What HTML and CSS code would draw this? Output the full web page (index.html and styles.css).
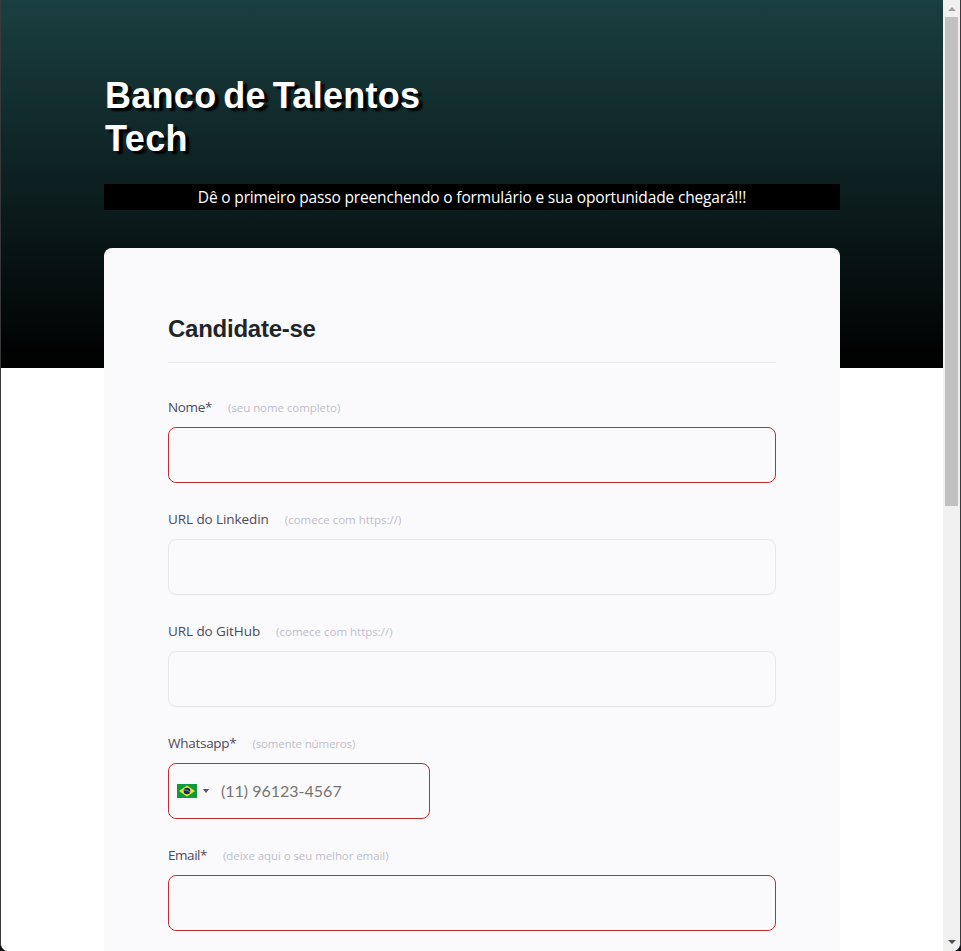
FILE: index.html
```html
<!DOCTYPE html>
<html lang="pt-BR">
<head>
<meta charset="utf-8">
<title>Banco de Talentos Tech</title>
<link rel="stylesheet" href="styles.css">
</head>
<body>
<div class="window">
  <div class="page">
    <header class="hero">
      <h1 class="hero-title"><span class="line-one">Banco de Talentos</span><br><span class="line-two">Tech</span></h1>
      <p class="hero-text"><span>Dê o primeiro passo preenchendo o formulário e sua oportunidade chegará!!!</span></p>
    </header>
    <main class="card">
      <h2 class="card-title"><span>Candidate-se</span></h2>
      <form class="form">
        <div class="field">
          <label class="label" for="nome"><span class="name n1">Nome*</span><small class="hint h1">(seu nome completo)</small></label>
          <input class="input required" id="nome" type="text">
        </div>
        <div class="field">
          <label class="label" for="linkedin"><span class="name n2">URL do Linkedin</span><small class="hint h2">(comece com https://)</small></label>
          <input class="input" id="linkedin" type="text">
        </div>
        <div class="field">
          <label class="label" for="github"><span class="name n2">URL do GitHub</span><small class="hint h2">(comece com https://)</small></label>
          <input class="input" id="github" type="text">
        </div>
        <div class="field">
          <label class="label" for="whatsapp"><span class="name n4">Whatsapp*</span><small class="hint h4">(somente números)</small></label>
          <div class="input required phone">
            <svg class="flag" width="20" height="14" viewBox="0 0 20 14" aria-hidden="true">
              <rect width="20" height="14" fill="#109b3b"/>
              <path d="M10 1.500 18 7 10 12.500 2 7Z" fill="#e8e337"/>
              <circle cx="10" cy="7" r="3.300" fill="#142a57"/>
              <path d="M7 5.900Q10.500 5.600 13 8.100" fill="none" stroke="#b9c7d8" stroke-width=".7"/>
            </svg>
            <span class="caret"></span>
            <input class="phone-input" id="whatsapp" type="tel" placeholder="(11) 96123-4567">
          </div>
        </div>
        <div class="field">
          <label class="label" for="email"><span class="name n5">Email*</span><small class="hint h5">(deixe aqui o seu melhor email)</small></label>
          <input class="input required" id="email" type="email">
        </div>
      </form>
    </main>
  </div>
  <div class="scrollbar">
    <span class="arrow up"></span>
    <span class="thumb"></span>
    <span class="arrow down"></span>
  </div>
</div>
</body>
</html>
```

FILE: styles.css
```css
* { box-sizing: border-box; }
html { background: #101015; }
body {
  margin: 0;
  height: 951px;
  overflow: hidden;
  font-family: "Open Sans", "Noto Sans", sans-serif;
}
.window {
  display: flex;
  height: 951px;
  border: solid #39393b;
  border-width: 0 1px;
  border-radius: 0 0 8px 8px;
  overflow: hidden;
  background: #fff;
}
.page {
  flex: 1;
  height: 951px;
  overflow: hidden;
  padding: 0 103px;
  background: linear-gradient(#1a3f40 0, #000 368px, #fff 368px);
}
.hero { height: 248px; padding-top: 74px; }
.hero-title {
  margin: 0 0 24px;
  padding-left: 1px;
  font: bold 36px/43px "Liberation Sans", Arial, sans-serif;
  color: #fff;
  text-shadow: 4px 3px 2px #000;
}
.line-one { letter-spacing: .28px; word-spacing: -3.4px; }
.line-two { letter-spacing: .4px; }
.hero-text {
  margin: 0;
  height: 26px;
  background: #000;
  color: #fff;
  font-size: 15.5px;
  letter-spacing: -.16px;
  line-height: 26px;
  text-align: center;
  white-space: nowrap;
}
.card {
  height: 760px;
  padding: 64px 64px 0;
  border-radius: 8px 8px 0 0;
  background: #fafafc;
}
.card-title {
  height: 51px;
  margin: 0 0 32px;
  border-bottom: 1px solid #e8e8ec;
  font: bold 24px/34px "Liberation Sans", Arial, sans-serif;
  letter-spacing: -.25px;
  color: #1f2629;
}
.form { display: flex; flex-direction: column; gap: 24px; }
.label {
  display: flex;
  align-items: baseline;
  gap: 16px;
  height: 24px;
  margin-bottom: 8px;
  line-height: 25px;
  white-space: nowrap;
}
.field { height: 88px; }
.name { font-size: 13.5px; color: #4e4958; }
.hint { font-size: 11.5px; color: #c1bfc9; }
.n1 { letter-spacing: -.35px; }
.n2 { letter-spacing: -.08px; }
.n4 { letter-spacing: -.27px; }
.n5 { letter-spacing: -.45px; }
.h1 { letter-spacing: -.06px; }
.h4 { letter-spacing: -.15px; }
.h5 { letter-spacing: -.08px; }
.input {
  display: block;
  width: 100%;
  height: 56px;
  padding: 0 16px;
  border: 1px solid #e6e6ec;
  border-radius: 8px;
  background: #fafafc;
  outline: 0;
}
.required { border-color: #c12e31; }
.phone { display: flex; align-items: center; width: 262px; padding: 0 8px; }
.flag { flex: none; margin-top: -1px; }
.caret {
  margin: 0 12px 0 6px;
  border: 3px solid transparent;
  border-top: 4px solid #555;
  border-bottom: 0;
}
.phone-input {
  flex: 1;
  min-width: 0;
  padding: 0 0 2px;
  border: 0;
  outline: 0;
  background: transparent;
  font: 16px Lato, sans-serif;
}
.phone-input::placeholder { color: #757575; opacity: 1; }
.scrollbar {
  display: flex;
  flex-direction: column;
  align-items: center;
  width: 17px;
  height: 951px;
  background: #f0f0f0;
}
.arrow { border: 4px solid transparent; }
.up { margin-top: 7px; border-top: 0; border-bottom-color: #a0a0a0; }
.thumb { width: 13px; height: 489px; margin-top: 6px; background: #c1c1c1; }
.down { margin: auto 0 7px; border-bottom: 0; border-top-color: #505050; }
```
